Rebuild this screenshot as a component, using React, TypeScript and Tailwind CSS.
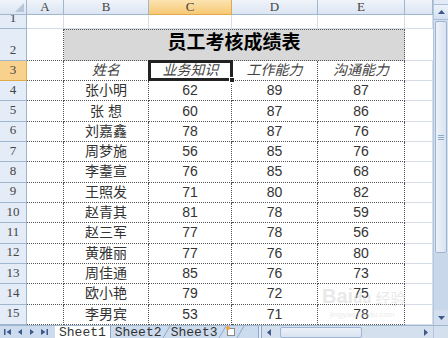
import React from 'react';

const rows: [string, number, number, number][] = [
  ['张小明', 62, 89, 87],
  ['张 想', 60, 87, 86],
  ['刘嘉鑫', 78, 87, 76],
  ['周梦施', 56, 85, 76],
  ['李耋宣', 76, 85, 68],
  ['王照发', 71, 80, 82],
  ['赵青其', 81, 78, 59],
  ['赵三军', 77, 78, 56],
  ['黄雅丽', 77, 76, 80],
  ['周佳通', 85, 76, 73],
  ['欧小艳', 79, 72, 75],
  ['李男宾', 53, 71, 78],
];

const cjk = "font-['Liberation_Sans','Noto_Sans_CJK_SC',sans-serif]";
const hdr = "font-['Liberation_Serif','Noto_Sans_CJK_SC',serif]";

function ColHead({ label, active }: { label: string; active?: boolean }) {
  return (
    <div
      className={
        active
          ? 'flex items-center justify-center border-r border-b border-[#e0a94a] bg-gradient-to-b from-[#fbe3b0] to-[#f7c974] text-[13px] text-[#444]'
          : 'flex items-center justify-center border-r border-b border-[#9eb6ce] bg-gradient-to-b from-[#f0f4fa] to-[#dbe5f2] text-[13px] text-[#444]'
      }
    >
      {label}
    </div>
  );
}

function RowHead({ n, active }: { n: number; active?: boolean }) {
  return (
    <div
      className={
        active
          ? 'flex items-end justify-center pb-[1px] border-r border-b border-[#e0a94a] bg-[#f8d18c] text-[13px] text-[#444]'
          : 'flex items-end justify-center pb-[1px] border-r border-b border-[#9eb6ce] bg-[#e4ecf7] text-[13px] text-[#444]'
      }
    >
      {n}
    </div>
  );
}

const plain = 'border-r border-b border-[#d6dde8] bg-white';
const dot = 'flex items-center justify-center border-r border-b border-dotted border-[#555] bg-white text-[14px] text-[#333]';

function NavIcons() {
  return (
    <div className="flex items-center gap-[4px] pl-[4px] pr-[7px] text-[#3d5a8a]">
      <svg width="8" height="8" viewBox="0 0 8 8"><rect x="0" y="1" width="1.5" height="6" fill="currentColor" /><path d="M7 1 L2.5 4 L7 7Z" fill="currentColor" /></svg>
      <svg width="8" height="8" viewBox="0 0 8 8"><path d="M6 1 L2 4 L6 7Z" fill="currentColor" /></svg>
      <svg width="8" height="8" viewBox="0 0 8 8"><path d="M2 1 L6 4 L2 7Z" fill="currentColor" /></svg>
      <svg width="8" height="8" viewBox="0 0 8 8"><path d="M1 1 L5.5 4 L1 7Z" fill="currentColor" /><rect x="6.5" y="1" width="1.5" height="6" fill="currentColor" /></svg>
    </div>
  );
}

export default function App() {
  return (
    <div className="w-[448px] h-[338px] overflow-hidden bg-white flex flex-col select-none">
      <div className="flex h-[325px]">
        {/* sheet grid */}
        <div className={`relative grid w-[433px] grid-cols-[27px_37px_85px_83px_86px_87px_28px] grid-rows-[15px_14px_32px_20px_repeat(12,20.33px)] ${hdr}`}>
          <div className="relative border-r border-b border-[#9eb6ce] bg-gradient-to-b from-[#f0f4fa] to-[#dbe5f2]">
            <div className="absolute right-[2px] bottom-[2px] w-0 h-0 border-l-[9px] border-l-transparent border-b-[9px] border-b-[#b7c6da]" />
          </div>
          <ColHead label="A" />
          <ColHead label="B" />
          <ColHead label="C" active />
          <ColHead label="D" />
          <ColHead label="E" />
          <ColHead label="" />

          {/* row 1 */}
          <RowHead n={1} />
          <div className={plain} />
          <div className={plain} />
          <div className={plain} />
          <div className={plain} />
          <div className={plain} />
          <div className={plain} />

          {/* row 2 */}
          <RowHead n={2} />
          <div className="border-r border-b border-dotted border-[#555] bg-white" />
          <div className={`col-span-4 flex items-end justify-center pb-[3px] border-r border-b border-t border-dotted border-[#555] bg-[#d8d8d8] text-[19px] font-bold text-black ${cjk}`}>
            员工考核成绩表
          </div>
          <div className="border-b border-[#d6dde8] bg-white" />

          {/* row 3 */}
          <RowHead n={3} active />
          <div className="border-r border-b border-dotted border-[#555] bg-white" />
          <div className={`${dot} italic text-[#444] ${cjk}`}>姓名</div>
          <div className="relative bg-white border-b border-dotted border-[#555]">
            <div className={`absolute inset-[-1px] flex items-center justify-center border-[3px] border-[#222] italic text-[14px] text-[#444] ${cjk}`}>
              业务知识
              <div className="absolute right-[-5px] bottom-[-5px] w-[6px] h-[6px] bg-[#222] border border-white" />
            </div>
          </div>
          <div className={`${dot} italic text-[#444] ${cjk}`}>工作能力</div>
          <div className={`${dot} italic text-[#444] ${cjk}`}>沟通能力</div>
          <div className={plain} />

          {rows.map((r, i) => (
            <React.Fragment key={i}>
              <RowHead n={i + 4} />
              <div className="border-r border-b border-dotted border-[#555] bg-white" />
              <div className={`${dot} ${cjk}`}>{r[0]}</div>
              <div className={`${dot} ${cjk}`}>{r[1]}</div>
              <div className={`${dot} ${cjk}`}>{r[2]}</div>
              <div className={`${dot} ${cjk}`}>{r[3]}</div>
              <div className={plain} />
            </React.Fragment>
          ))}

          {/* faint watermark over the lower right cells */}
          <div className="pointer-events-none absolute left-[322px] top-[286px] flex items-end gap-[4px] leading-none text-[#d4d4d4] opacity-50 font-['Liberation_Sans','Noto_Sans_CJK_SC',sans-serif]">
            <span className="text-[20px] font-bold">Bai<span className="text-[15px]">du</span></span>
            <span className="text-[15px]">经验</span>
          </div>
          <div className="pointer-events-none absolute left-[330px] top-[311px] text-[8px] leading-none text-[#d8d8d8] opacity-50 font-['Liberation_Sans',sans-serif]">
            jingyan.baidu.com
          </div>
        </div>

        {/* vertical scrollbar */}
        <div className="w-[15px] flex flex-col bg-[#d5e0ef] border-l border-[#b5c7de]">
          <div className="h-[5px] bg-[#e3ebf6] border-b border-[#a9bdd8]" />
          <div className="h-[15px] flex items-center justify-center bg-gradient-to-b from-[#eef3fa] to-[#d3dfef] border-b border-[#a9bdd8]">
            <svg width="7" height="4" viewBox="0 0 7 4"><path d="M0 4 L3.5 0 L7 4Z" fill="#3d5a8a" /></svg>
          </div>
          <div className="h-[232px] mx-[1px] mt-[1px] flex items-center justify-center rounded-[2px] border border-[#9fb4d3] bg-gradient-to-r from-[#edf2f9] to-[#d8e3f1]">
            <div className="flex flex-col gap-[1px]">
              <div className="w-[6px] h-[1px] bg-[#8ea6c8]" />
              <div className="w-[6px] h-[1px] bg-[#8ea6c8]" />
              <div className="w-[6px] h-[1px] bg-[#8ea6c8]" />
            </div>
          </div>
          <div className="flex-1 bg-[#c9d7ea]" />
          <div className="h-[15px] flex items-center justify-center bg-[#d3dfef]">
            <svg width="7" height="4" viewBox="0 0 7 4"><path d="M0 0 L3.5 4 L7 0Z" fill="#3d5a8a" /></svg>
          </div>
        </div>
      </div>

      {/* tab bar */}
      <div className="h-[13px] flex items-center bg-[#cddbee] border-t border-[#9eb6ce] font-['Liberation_Mono',monospace] text-[13px] text-[#333]">
        <NavIcons />
        <div className="h-full flex items-center px-[4px] bg-white border-r border-[#8ea6c8] leading-none">Sheet1</div>
        <div className="h-full flex items-center px-[4px] border-r border-[#8ea6c8] skew-x-[-30deg]"><span className="skew-x-[30deg] leading-none">Sheet2</span></div>
        <div className="h-full flex items-center px-[4px] border-r border-[#8ea6c8] skew-x-[-30deg]"><span className="skew-x-[30deg] leading-none">Sheet3</span></div>
        <div className="h-full flex items-center px-[5px] border-r border-[#8ea6c8] skew-x-[-30deg]">
          <span className="skew-x-[30deg] inline-block w-[8px] h-[8px] border border-[#8a8a8a] bg-white relative">
            <span className="absolute -left-[2px] -top-[3px] w-[4px] h-[4px] rounded-full bg-[#f2a33a]" />
          </span>
        </div>
        <div className="flex-1" />
        <div className="w-[4px] h-full border-x border-[#8ea6c8] bg-[#e4ecf7]" />
        {/* horizontal scrollbar */}
        <div className="w-[171px] h-full flex items-center bg-[#d5e0ef]">
          <div className="w-[14px] h-full flex items-center justify-center">
            <svg width="4" height="7" viewBox="0 0 4 7"><path d="M4 0 L0 3.5 L4 7Z" fill="#3d5a8a" /></svg>
          </div>
          <div className="ml-[4px] w-[82px] h-[11px] rounded-[2px] border border-[#9fb4d3] bg-gradient-to-b from-[#edf2f9] to-[#d8e3f1]" />
          <div className="flex-1" />
          <div className="w-[14px] h-full flex items-center justify-center">
            <svg width="4" height="7" viewBox="0 0 4 7"><path d="M0 0 L4 3.5 L0 7Z" fill="#3d5a8a" /></svg>
          </div>
        </div>
        <div className="w-[15px] h-full bg-[#d5e0ef] border-l border-[#b5c7de]" />
      </div>
    </div>
  );
}
